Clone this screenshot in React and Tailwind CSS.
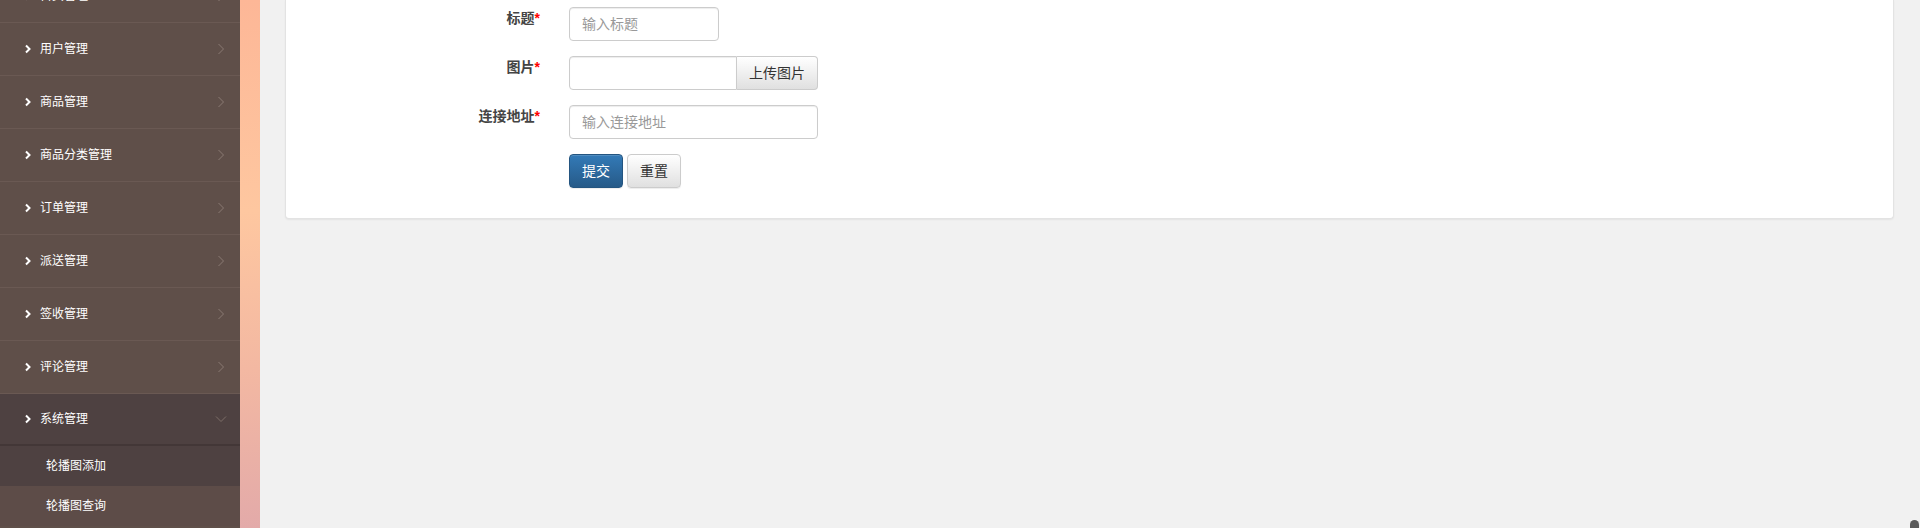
import React from "react";

const cjk = { fontFamily: '"Liberation Sans","Noto Sans CJK SC",sans-serif' };

function ChevRight({ className }) {
  return (
    <svg className={className} width="8" height="10" viewBox="0 0 8 10" fill="none">
      <path d="M2 1.5 L5.5 5 L2 8.5" stroke="currentColor" strokeWidth="2" />
    </svg>
  );
}

function ThinRight() {
  return (
    <svg width="8" height="12" viewBox="0 0 8 12" fill="none">
      <path d="M1.5 1 L6.5 6 L1.5 11" stroke="#8a7a73" strokeWidth="1" />
    </svg>
  );
}

function ThinDown() {
  return (
    <svg width="12" height="8" viewBox="0 0 12 8" fill="none">
      <path d="M1 1.5 L6 6.5 L11 1.5" stroke="#7d6e68" strokeWidth="1" />
    </svg>
  );
}

const items = ["首页管理", "用户管理", "商品管理", "商品分类管理", "订单管理", "派送管理", "签收管理", "评论管理"];

function NavItem({ label }) {
  return (
    <div className="h-[53px] border-b border-[#6a5953] flex items-center pl-[24px] pr-[15px] text-white text-[12px]">
      <ChevRight className="text-white" />
      <span className="ml-[8px] flex-1">{label}</span>
      <ThinRight />
    </div>
  );
}

function Label({ text }) {
  return (
    <div className="w-[254px] text-right text-[14px] font-bold text-[#444] leading-[22px]">
      {text}
      <span className="text-[#ff0000]">*</span>
    </div>
  );
}

export default function App() {
  return (
    <div className="relative w-[1920px] h-[528px] overflow-hidden flex bg-[#f1f1f1]" style={cjk}>
      <aside className="w-[240px] h-full bg-[#5f4f49] overflow-hidden flex flex-col">
        <div className="mt-[-30px]">
          {items.map((it) => (
            <NavItem key={it} label={it} />
          ))}
          <div className="h-[52px] bg-[#4e4141] border-b-2 border-[#433737] flex items-center pl-[24px] pr-[13px] text-white text-[12px]">
            <ChevRight className="text-white" />
            <span className="ml-[8px] flex-1">系统管理</span>
            <ThinDown />
          </div>
          <div className="h-[40px] bg-[#4e4141] flex items-center pl-[46px] text-white text-[12px]">轮播图添加</div>
          <div className="h-[40px] bg-[#5d4c48] flex items-center pl-[46px] text-white text-[12px]">轮播图查询</div>
        </div>
      </aside>
      <div className="w-[20px] h-full bg-[linear-gradient(to_bottom,#fdb797_0%,#fec7a0_40%,#f3b8a2_70%,#e3aaa9_100%)]" />
      <main className="flex-1 pl-[25px] pr-[26px]">
        <div className="bg-white rounded-b-[4px] border border-t-0 border-[#e3e3e3] shadow-[0_1px_2px_rgba(0,0,0,0.06)] pt-[7px] pb-[30px]">
          <div className="flex mb-[15px]">
            <Label text="标题" />
            <input
              className="ml-[29px] w-[150px] h-[34px] border border-[#cccccc] rounded-[4px] px-[12px] text-[14px] text-[#555] placeholder:text-[#999] shadow-[inset_0_1px_1px_rgba(0,0,0,0.075)] outline-none"
              placeholder="输入标题"
            />
          </div>
          <div className="flex mb-[15px]">
            <Label text="图片" />
            <div className="ml-[29px] flex h-[34px]">
              <div className="w-[168px] h-[34px] border border-[#cccccc] rounded-l-[4px] shadow-[inset_0_1px_1px_rgba(0,0,0,0.075)]" />
              <button className="w-[81px] h-[34px] border border-l-0 border-[#cccccc] rounded-r-[4px] bg-[linear-gradient(to_bottom,#ffffff,#e0e0e0)] text-[14px] text-[#333]">
                上传图片
              </button>
            </div>
          </div>
          <div className="flex mb-[15px]">
            <Label text="连接地址" />
            <input
              className="ml-[29px] w-[249px] h-[34px] border border-[#cccccc] rounded-[4px] px-[12px] text-[14px] text-[#555] placeholder:text-[#999] shadow-[inset_0_1px_1px_rgba(0,0,0,0.075)] outline-none"
              placeholder="输入连接地址"
            />
          </div>
          <div className="flex">
            <div className="w-[254px]" />
            <div className="ml-[29px] flex gap-[4px]">
              <button className="w-[54px] h-[34px] rounded-[4px] border border-[#245580] bg-[linear-gradient(to_bottom,#337ab7,#265a88)] text-white text-[14px] shadow-[inset_0_1px_0_rgba(255,255,255,0.15),0_1px_1px_rgba(0,0,0,0.075)]">
                提交
              </button>
              <button className="w-[54px] h-[34px] rounded-[4px] border border-[#cccccc] bg-[linear-gradient(to_bottom,#ffffff,#e0e0e0)] text-[#333] text-[14px] shadow-[inset_0_1px_0_rgba(255,255,255,0.15),0_1px_1px_rgba(0,0,0,0.075)]">
                重置
              </button>
            </div>
          </div>
        </div>
      </main>
      <div className="absolute left-[1910px] top-[520px] w-[9px] h-[20px] rounded-t-full bg-[#5a5a5a]" />
    </div>
  );
}
